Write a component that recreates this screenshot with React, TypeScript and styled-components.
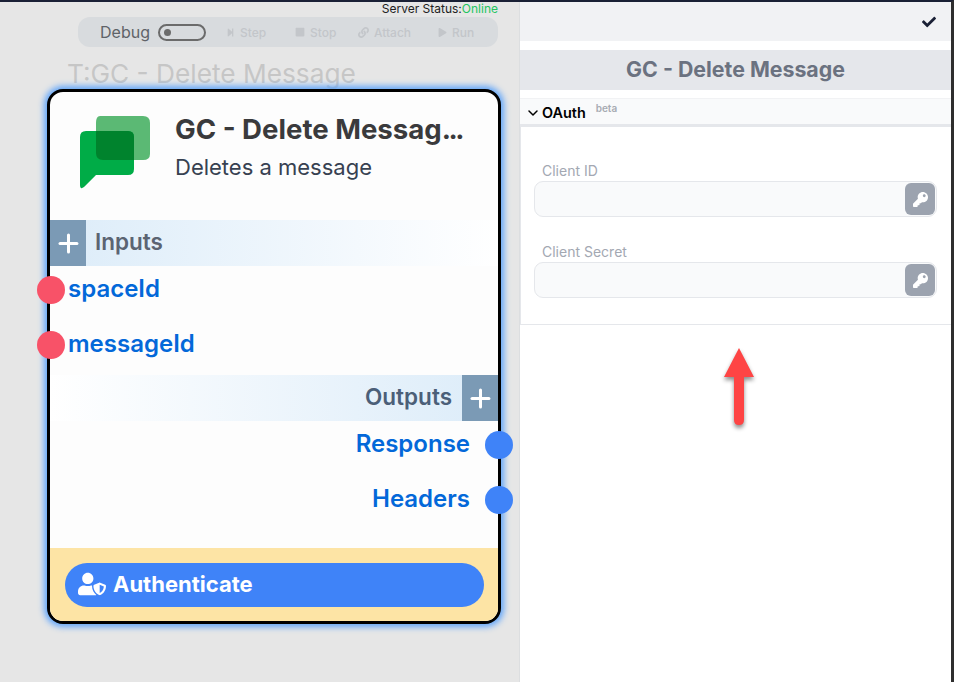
import React from "react";
import styled, { createGlobalStyle } from "styled-components";
import { FaCheck, FaKey, FaLink, FaPlay, FaStepForward, FaStop, FaUserShield } from "react-icons/fa";
import { ChevronDown, Plus } from "lucide-react";

const GlobalStyle = createGlobalStyle`
  html, body { margin: 0; padding: 0; height: 100%; overflow: hidden; }
  body { font-family: Inter, "Liberation Sans", sans-serif; background: #e6e6e6; }
  * { box-sizing: border-box; }
`;

const Frame = styled.div`
  width: 954px;
  height: 682px;
  display: flex;
  border-top: 2px solid #1a2035;
  border-right: 3px solid #2e2e2e;
`;

const Canvas = styled.div`
  width: 520px;
  flex: none;
  background: #e6e6e6;
  border-right: 1px solid #dcdee0;
  padding-left: 47px;
  display: flex;
  flex-direction: column;
  align-items: flex-start;
`;

const StatusLine = styled.div`
  width: 451px;
  height: 15px;
  text-align: right;
  font-size: 12px;
  line-height: 13px;
  color: #222;
`;

const Online = styled.span`
  color: #22c55e;
`;

const Toolbar = styled.div`
  width: 420px;
  height: 30px;
  margin-left: 31px;
  background: #d8dbde;
  border-radius: 12px;
  display: flex;
  align-items: center;
  padding-left: 22px;
`;

const DebugLabel = styled.span`
  font-size: 16px;
  color: #5f6368;
  margin-right: 8px;
`;

const Toggle = styled.span`
  width: 48px;
  height: 17px;
  border: 2px solid #6b6b6b;
  border-radius: 9px;
  display: flex;
  align-items: center;
  padding-left: 4px;
  margin-right: 20px;

  &::before {
    content: "";
    width: 7px;
    height: 7px;
    border-radius: 50%;
    background: #6b6b6b;
  }
`;

const ToolButton = styled.span<{ $width: number }>`
  width: ${(p) => p.$width}px;
  display: flex;
  align-items: center;
  gap: 5px;
  font-size: 12px;
  font-weight: 500;
  color: #c3c6ca;
`;

const CanvasTitle = styled.div`
  margin: 11px 0 0 20px;
  height: 31px;
  font-size: 26.25px;
  line-height: 31px;
  color: #c6c6c6;
  white-space: nowrap;
`;

const Card = styled.div`
  position: relative;
  width: 454px;
  height: 535px;
  background: #fdfdfd;
  border: 3px solid #000;
  border-radius: 16px;
  box-shadow: 0 0 6px 3px #60a5fa;
  display: flex;
  flex-direction: column;
`;

const CardHead = styled.div`
  height: 128px;
  display: flex;
  padding: 24px 0 0 30px;
  flex: none;
`;

const CardHeadText = styled.div`
  margin-left: 25px;
`;

const CardTitle = styled.div`
  font-size: 27.6px;
  line-height: 33px;
  font-weight: 700;
  color: #3a3a3c;
  margin-top: -3px;
  white-space: nowrap;
`;

const TitleDots = styled.span`
  letter-spacing: -2.5px;
`;

const CardSub = styled.div`
  font-size: 22px;
  line-height: 24px;
  margin-top: 9px;
  color: #374151;
`;

const SectionBar = styled.div<{ $right?: boolean }>`
  height: 46px;
  flex: none;
  display: flex;
  align-items: center;
  justify-content: ${(p) => (p.$right ? "flex-end" : "flex-start")};
  background: linear-gradient(${(p) => (p.$right ? "to left" : "to right")}, #dcecf9, #ffffff);
`;

const SectionLabel = styled.span<{ $right?: boolean }>`
  font-size: 22.5px;
  font-weight: 600;
  color: ${(p) => (p.$right ? "#4b5f78" : "#5b6472")};
  margin: 0 ${(p) => (p.$right ? 10 : 9)}px;
  padding-bottom: 3px;
`;

const AddButton = styled.span`
  width: 36px;
  height: 46px;
  background: #7b9ab5;
  color: #fff;
  display: flex;
  align-items: center;
  justify-content: center;
`;

const PortList = styled.div<{ $height: number; $right?: boolean }>`
  height: ${(p) => p.$height}px;
  flex: none;
  display: flex;
  flex-direction: column;
  padding: ${(p) => (p.$right ? "0 28px 0 0" : "0 0 0 18px")};
`;

const Port = styled.div<{ $right?: boolean }>`
  position: relative;
  height: 55px;
  font-size: 24px;
  font-weight: 600;
  line-height: 46px;
  color: #0368d9;
  text-align: ${(p) => (p.$right ? "right" : "left")};
`;

const Pin = styled.span<{ $right?: boolean }>`
  position: absolute;
  top: 10px;
  width: 28px;
  height: 28px;
  border-radius: 50%;
  background: ${(p) => (p.$right ? "#3f83f8" : "#f85268")};
  ${(p) => (p.$right ? "right: -43px;" : "left: -31px;")}
`;

const CardFoot = styled.div`
  flex: 1;
  background: #fde4a5;
  border-radius: 0 0 13px 13px;
  padding: 15px 14px 0 15px;
`;

const AuthButton = styled.div`
  height: 44px;
  background: #3f83f8;
  border-radius: 22px;
  color: #fff;
  display: flex;
  align-items: center;
  padding: 0 0 2px 13px;
  gap: 7px;
  font-size: 22px;
  font-weight: 700;
`;

const Panel = styled.div`
  flex: 1;
  background: #fff;
  display: flex;
  flex-direction: column;
  align-items: stretch;
`;

const PanelTop = styled.div`
  height: 39px;
  background: #f1f2f4;
  display: flex;
  align-items: center;
  justify-content: flex-end;
  padding-right: 15px;
  color: #1a2035;
  font-size: 14px;
`;

const PanelTitle = styled.div`
  margin-top: 9px;
  height: 40px;
  background: #e5e7eb;
  text-align: center;
  font-size: 21.33px;
  font-weight: 700;
  line-height: 39px;
  color: #6b7280;
`;

const AccordionHead = styled.div`
  margin-top: 8px;
  height: 26px;
  background: #f9fafb;
  border-top: 1px solid #f1f2f4;
  display: flex;
  align-items: center;
  padding: 2px 0 0 5px;
  gap: 1px;
  font-size: 14.4px;
  font-weight: 600;
  color: #000;
`;

const Beta = styled.sup`
  font-size: 10px;
  font-weight: 600;
  color: #a8acb3;
  margin: 0 0 9px 9px;
`;

const AccordionBody = styled.div`
  height: 201px;
  border-top: 3px solid #e5e7eb;
  border-bottom: 1px solid #e5e7eb;
  border-left: 1px solid #e5e7eb;
  padding: 35px 14px 0 13px;
  display: flex;
  flex-direction: column;
  gap: 26px;
`;

const Field = styled.div`
  display: flex;
  flex-direction: column;
`;

const FieldLabel = styled.label`
  font-size: 14px;
  height: 19px;
  line-height: 17px;
  color: #a3a8b2;
  padding-left: 8px;
`;

const InputBox = styled.div`
  height: 36px;
  background: #f9fafb;
  border: 1px solid #e5e7eb;
  border-radius: 9px;
  display: flex;
  justify-content: flex-end;
  align-items: center;
  padding-right: 1px;
`;

const KeyButton = styled.span`
  width: 30px;
  height: 32px;
  border-radius: 6px;
  background: #9ca3af;
  color: #fff;
  display: flex;
  align-items: center;
  justify-content: center;
  font-size: 15px;
`;

const ArrowWrap = styled.div`
  margin: 22px 0 0 203px;
  width: 32px;
  height: 82px;
`;

const UpArrow = () => (
  <svg width="32" height="82" viewBox="0 0 32 82" style={{ overflow: "visible", filter: "drop-shadow(0 3px 2px rgba(0,0,0,.45))" }}>
    <path d="M16 1 L31 30 L21 30 L21 73 Q21 78 16 78 Q11 78 11 73 L11 30 L1 30 Z" fill="#fe4444" />
  </svg>
);

const ChatLogo = () => (
  <svg width="70" height="73" viewBox="0 0 70 73" style={{ flex: "none" }}>
    <path d="M20 0 H63 Q70 0 70 7 V38 Q70 44 63 44 H23 Q16 44 16 37 V7 Q16 0 20 0 Z" fill="#5bb974" />
    <path d="M6 15 H48 Q54 15 54 21 V53 Q54 59 48 59 H16 L4 71 Q0 74 0 69 V21 Q0 15 6 15 Z" fill="#00ac47" />
    <path d="M16 15 H48 Q54 15 54 21 V44 H23 Q16 44 16 37 Z" fill="#00832d" />
  </svg>
);

const OAuthField = ({ label }: { label: string }) => (
  <Field>
    <FieldLabel>{label}</FieldLabel>
    <InputBox>
      <KeyButton>
        <FaKey />
      </KeyButton>
    </InputBox>
  </Field>
);

export default function App() {
  return (
    <Frame>
      <GlobalStyle />
      <Canvas>
        <StatusLine>
          Server Status:<Online>Online</Online>
        </StatusLine>
        <Toolbar>
          <DebugLabel>Debug</DebugLabel>
          <Toggle />
          <ToolButton $width={69}>
            <FaStepForward size={9} /> Step
          </ToolButton>
          <ToolButton $width={63}>
            <FaStop size={10} /> Stop
          </ToolButton>
          <ToolButton $width={80}>
            <FaLink size={11} /> Attach
          </ToolButton>
          <ToolButton $width={40}>
            <FaPlay size={9} /> Run
          </ToolButton>
        </Toolbar>
        <CanvasTitle>T:GC - Delete Message</CanvasTitle>
        <Card>
          <CardHead>
            <ChatLogo />
            <CardHeadText>
              <CardTitle>
                GC - Delete Messag<TitleDots>...</TitleDots>
              </CardTitle>
              <CardSub>Deletes a message</CardSub>
            </CardHeadText>
          </CardHead>
          <SectionBar>
            <AddButton>
              <Plus size={29} strokeWidth={2.5} />
            </AddButton>
            <SectionLabel>Inputs</SectionLabel>
          </SectionBar>
          <PortList $height={109}>
            <Port>
              <Pin />
              spaceId
            </Port>
            <Port>
              <Pin />
              messageId
            </Port>
          </PortList>
          <SectionBar $right>
            <SectionLabel $right>Outputs</SectionLabel>
            <AddButton>
              <Plus size={29} strokeWidth={2.5} />
            </AddButton>
          </SectionBar>
          <PortList $height={127} $right>
            <Port $right>
              Response
              <Pin $right />
            </Port>
            <Port $right>
              Headers
              <Pin $right />
            </Port>
          </PortList>
          <CardFoot>
            <AuthButton>
              <FaUserShield size={28} />
              Authenticate
            </AuthButton>
          </CardFoot>
        </Card>
      </Canvas>
      <Panel>
        <PanelTop>
          <FaCheck />
        </PanelTop>
        <PanelTitle>GC - Delete Message</PanelTitle>
        <AccordionHead>
          <ChevronDown size={16} strokeWidth={2.25} />
          OAuth
          <Beta>beta</Beta>
        </AccordionHead>
        <AccordionBody>
          <OAuthField label="Client ID" />
          <OAuthField label="Client Secret" />
        </AccordionBody>
        <ArrowWrap>
          <UpArrow />
        </ArrowWrap>
      </Panel>
    </Frame>
  );
}
